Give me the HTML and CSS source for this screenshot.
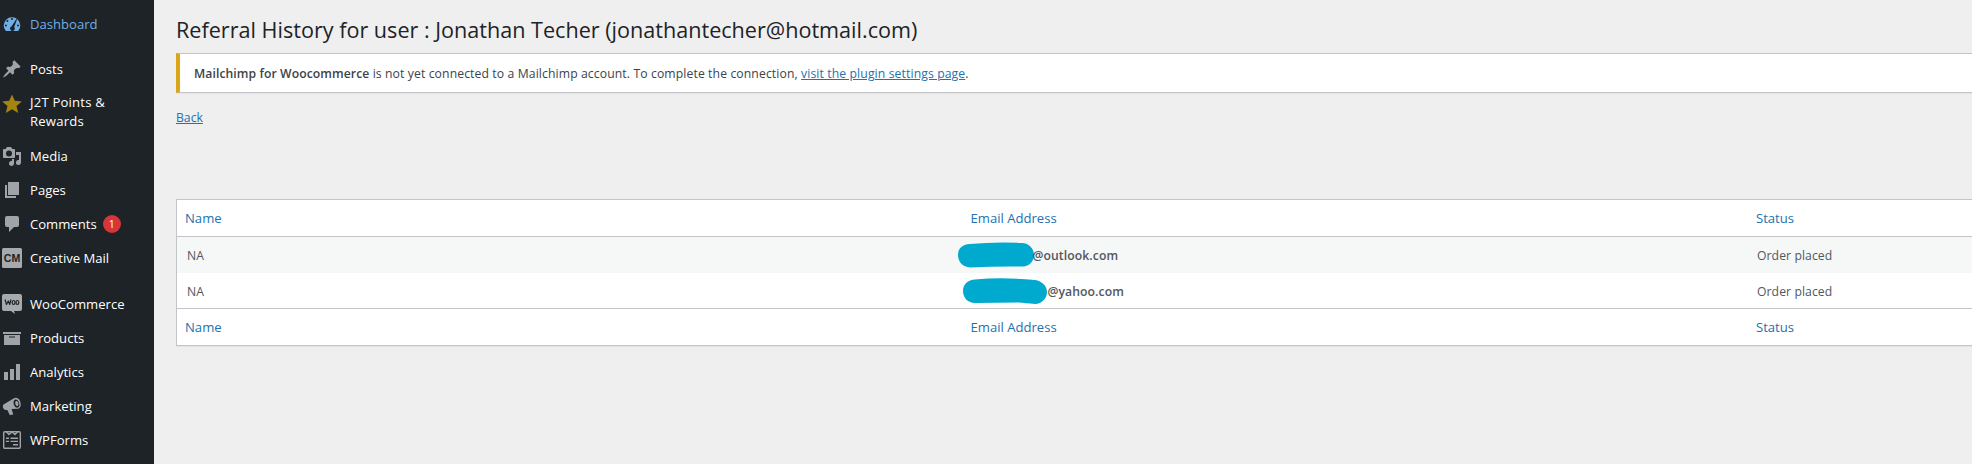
FILE: index.html
```html
<!DOCTYPE html>
<html lang="en">
<head>
<meta charset="utf-8">
<title>Referral History</title>
<link rel="stylesheet" href="styles.css">
</head>
<body>
<div class="layout">
<nav class="menu">
  <a class="item current"><svg class="icon" viewBox="0 0 20 20"><path fill="currentColor" fill-rule="evenodd" d="M3.8 17h12.4A8.3 8.3 0 0 0 18.3 11.5a8.3 8.3 0 0 0-16.6 0A8.3 8.3 0 0 0 3.8 17zM10 4a1 1 0 1 1 0 2 1 1 0 0 1 0-2zM5.4 6a1 1 0 1 1 0 2 1 1 0 0 1 0-2zM14.3 5l.7.4-2.8 7.7a2.3 2.3 0 1 1-2.7-.6zM3.9 10.5a1 1 0 1 1 0 2 1 1 0 0 1 0-2zM16 10.5a1 1 0 1 1 0 2 1 1 0 0 1 0-2z"/></svg><span>Dashboard</span></a>
  <a class="item section"><svg class="icon" viewBox="0 0 20 20"><path fill="currentColor" d="M10.44 3.02l1.82-1.82 6.36 6.35-1.83 1.82c-1.05-.68-2.48-.57-3.41.36l-.75.75c-.92.93-1.04 2.35-.35 3.41l-1.83 1.82-2.41-2.41-2.8 2.79c-.42.42-3.38 2.71-3.8 2.29s1.86-3.39 2.28-3.81l2.79-2.79L4.1 9.36l1.83-1.82c1.05.69 2.48.57 3.4-.36l.75-.75c.93-.92 1.05-2.35.36-3.41z"/></svg><span>Posts</span></a>
  <a class="item tall"><svg class="icon star" viewBox="0 0 20 20"><path fill="currentColor" d="M10 .5l2.8 6.3 7 .6-5.300 4.700 1.700 6.900L10 15.200 3.800 19l1.700-6.900L.2 7.400l7-.6z"/></svg><span>J2T Points &amp;<br>Rewards</span></a>
  <a class="item"><svg class="icon" viewBox="0 0 20 20"><path fill="currentColor" fill-rule="evenodd" d="M13 11V4c0-.55-.45-1-1-1h-1.670L9 1H5L3.670 3H2c-.55 0-1 .45-1 1v7c0 .55.45 1 1 1h10c.55 0 1-.45 1-1zM7 4.500a3 3 0 1 1 0 6 3 3 0 0 1 0-6zM14 6h5v10.500a2.500 2.500 0 1 1-2-2.450V9h-3zM10 13h2v4.500A2.500 2.500 0 1 1 10 15z"/></svg><span>Media</span></a>
  <a class="item"><svg class="icon" viewBox="0 0 20 20"><path fill="currentColor" d="M6 15V2h11v13zM5 16h9v2H3V5h2z"/></svg><span>Pages</span></a>
  <a class="item"><svg class="icon" viewBox="0 0 20 20"><path fill="currentColor" d="M5 2h10q2 0 2 2v7q0 2-2 2h-3l-5 5v-5H5q-2 0-2-2V4q0-2 2-2z"/></svg><span>Comments</span><b class="count">1</b></a>
  <a class="item"><svg class="icon" viewBox="0 0 20 20"><rect width="20" height="20" rx="1.500" fill="#a7aaad"/><text class="cm" x="10" y="13.900" text-anchor="middle" textLength="16.500" lengthAdjust="spacingAndGlyphs">CM</text></svg><span>Creative Mail</span></a>
  <a class="item section woo"><svg class="icon" viewBox="0 0 20 20"><path fill="#a7aaad" d="M2 0h16q2 0 2 2v13q0 2-2 2h-6l1 3-4-3H2q-2 0-2-2V2Q0 0 2 0z"/><path fill="none" stroke="#1d2327" stroke-width="1.200" stroke-linejoin="round" d="M3 5.500l1.500 5L6.300 7l1.400 3.500L9 5.500"/><g fill="none" stroke="#1d2327" stroke-width="1.200"><ellipse cx="11.600" cy="8.500" rx="1.400" ry="2"/><ellipse cx="15.400" cy="8.500" rx="1.400" ry="2"/></g></svg><span>WooCommerce</span></a>
  <a class="item"><svg class="icon" viewBox="0 0 20 20"><path fill="currentColor" fill-rule="evenodd" d="M1 4h18v2H1zM2 7h16v10H2zM7 8.500v1h6v-1z"/></svg><span>Products</span></a>
  <a class="item"><svg class="icon" viewBox="0 0 20 20"><path fill="currentColor" d="M18 18V2h-4v16zM12 18V7H8v11zM6 18v-8H2v8z"/></svg><span>Analytics</span></a>
  <a class="item"><svg class="icon" viewBox="0 0 20 20"><path fill="currentColor" fill-rule="evenodd" d="M1.500 8.500L12 2.300C14 1 17 2 18.200 5.500c1.300 3.800 0 7-2.200 7.300L9.500 13l1.800 5.400-3.600.6L5.400 14H4C1 13.500 0 10 1.500 8.500zM13.200 3.500c-1.700.7-2 3-1.300 5.200.8 2.100 2.400 3.400 4 2.900 1.500-.6 1.900-3 1.100-5.200-.8-2.100-2.400-3.400-3.800-2.900zM14 5.200c1.200-.4 2.200.8 2.400 2.400s-.5 2.700-1.400 2.400c-1.600-.5-2.500-4.200-1-4.800z"/></svg><span>Marketing</span></a>
  <a class="item"><svg class="icon" viewBox="0 0 20 20"><g fill="none" stroke="currentColor" stroke-width="1.400"><rect x="1.700" y="1.700" width="16.600" height="16.600" rx="1"/><path d="M4.500 2l2.500 2.500L10 2l3 2.500L15.500 2M4 8.200h3M8.500 8.200H16M4 11.400h3M8.500 11.400H16M11 14.700h5"/></g></svg><span>WPForms</span></a>
</nav>
<main class="content">
  <h1 class="title">Referral History for user : Jonathan Techer (jonathantecher@hotmail.com)</h1>
  <div class="notice"><p class="message"><strong>Mailchimp for Woocommerce</strong> <span class="detail">is not yet connected to a Mailchimp account. To complete the connection, <a class="link">visit the plugin settings page</a>.</span></p></div>
  <a class="link back">Back</a>
  <div class="table">
    <div class="row head"><span>Name</span><span>Email Address</span><span>Status</span></div>
    <div class="row alt"><span>NA</span><span class="email first"><svg class="mask" width="76" height="26" viewBox="0 0 76 26"><path d="M12 2Q38-.5 64 1C71 1 76 7 76 13S71 25 64 24.500Q38 24 12 25.500C5 25 0 20 0 13S5 2 12 2z"/></svg><b class="domain">@outlook.com</b></span><span>Order placed</span></div>
    <div class="row"><span>NA</span><span class="email second"><svg class="mask" width="84" height="26" viewBox="0 0 84 26"><path d="M12 1.500Q40-1 72 2C79 3 84 8 84 14S79 26 72 26Q62 25 56 24.500L12 25C5 25 0 20 0 13S5 2 12 1.500z"/></svg><b class="domain yahoo">@yahoo.com</b></span><span>Order placed</span></div>
    <div class="row foot"><span>Name</span><span>Email Address</span><span>Status</span></div>
  </div>
</main>
</div>
</body>
</html>
```
FILE: styles.css
```css
* { box-sizing: border-box; }
body { margin: 0; overflow: hidden; background: #efefef; color: #3c434a; font-family: "Open Sans", "Noto Sans", sans-serif; }
.layout { display: flex; height: 464px; }
.menu { width: 154px; flex: none; padding-top: 7px; background: #1d2327; color: #fff; font-size: 13.1px; line-height: 19px; }
.item { display: flex; align-items: center; height: 34px; padding-left: 2px; gap: 8px; white-space: nowrap; }
.item.current, .current .icon { color: #72aee6; }
.item.section { margin-top: 11px; }
.item.section.woo { margin-top: 12px; }
.item.tall { height: 53px; align-items: flex-start; padding-top: 7px; letter-spacing: .2px; }
.tall .icon { margin-top: 1px; }
.icon { width: 20px; height: 20px; flex: none; color: #a0a4a9; overflow: visible; }
.icon.star { color: #a58510; }
.cm { font: bold 10.500px "Liberation Sans", sans-serif; letter-spacing: 0; fill: #1d2327; }
.count { width: 18px; height: 18px; margin-left: -2px; border-radius: 9px; background: #d63638; color: #fff; font-size: 10.500px; line-height: 18px; font-weight: 400; text-align: center; }
.content { flex: 1; min-width: 0; padding-left: 22px; }
.title { margin: 15px 0 8px; font-size: 21.600px; line-height: 30px; font-weight: 400; color: #1d2327; white-space: nowrap; }
.notice { height: 40px; border: 1px solid #c3c4c7; border-left: 4px solid #dba617; border-right: 0; background: #fff; box-shadow: 0 1px 1px rgba(0,0,0,.04); padding-left: 14px; }
.message { margin: 0; font-size: 12.200px; line-height: 39px; white-space: nowrap; }
.message strong { font-weight: 600; letter-spacing: .08px; }
.detail { letter-spacing: .11px; }
.link { color: #2271b1; text-decoration: underline; }
.back { display: block; width: max-content; margin-top: 15px; font-size: 12.200px; line-height: 20px; }
.table { margin-top: 71px; border: 1px solid #c3c4c7; border-right: 0; background: #fff; font-size: 12.200px; color: #50575e; box-shadow: 0 1px 1px rgba(0,0,0,.04); letter-spacing: .08px; }
.row { display: grid; grid-template-columns: 784.500px 785.500px 1fr; height: 36px; line-height: 37px; padding-left: 10px; white-space: nowrap; }
.head, .foot { color: #2271b1; font-size: 13.100px; padding-left: 8px; grid-template-columns: 785.500px 785.500px 1fr; letter-spacing: 0; }
.head { border-bottom: 1px solid #c3c4c7; height: 37px; }
.foot { border-top: 1px solid #c3c4c7; height: 37px; line-height: 36px; }
.row:nth-child(3) { height: 35px; }
.alt { background: #f6f7f7; }
.email { display: flex; align-items: center; height: 36px; }
.first { margin-left: -14px; }
.second { margin-left: -9px; }
.mask { flex: none; fill: #00a9ce; }
.domain { font-weight: 600; margin-left: -1px; }
.yahoo { margin-left: 1px; }
```
